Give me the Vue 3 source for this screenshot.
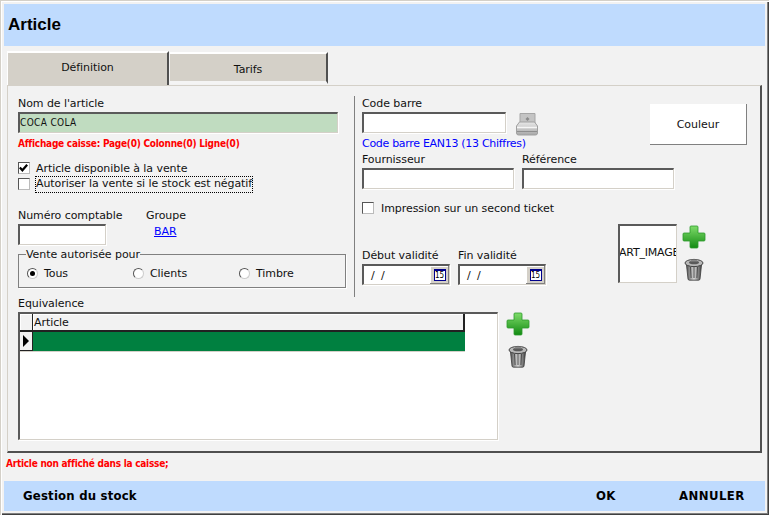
<script setup>
const radios = [
  { label: 'Tous', checked: true },
  { label: 'Clients', checked: false },
  { label: 'Timbre', checked: false },
]
</script>

<template>
  <div class="window">
    <header class="title">Article</header>
    <nav class="tabs">
      <div class="tab active">Définition</div>
      <div class="tab">Tarifs</div>
    </nav>
    <main class="panel">
      <div class="top">
        <section class="left">
          <label class="lbl">Nom de l'article</label>
          <div class="input name">COCA COLA</div>
          <div class="red-info">Affichage caisse: Page(0) Colonne(0) Ligne(0)</div>
          <div class="checks">
            <div class="check-row"><span class="box"><svg width="12" height="12" viewBox="0 0 12 12"><path d="M2 5.500 L4.800 8.500 L10 2.500" fill="none" stroke="#000" stroke-width="2.400"/></svg></span><span>Article disponible à la vente</span></div>
            <div class="check-row"><span class="box"></span><span class="focus">Autoriser la vente si le stock est négatif</span></div>
          </div>
          <div class="num-row">
            <div class="num-col">
              <label class="lbl">Numéro comptable</label>
              <div class="input num"></div>
            </div>
            <div>
              <label class="lbl">Groupe</label>
              <a class="link">BAR</a>
            </div>
          </div>
          <fieldset class="vente">
            <legend>Vente autorisée pour</legend>
            <div v-for="r in radios" :key="r.label" class="radio-item">
              <span class="radio" :class="{ on: r.checked }"></span>{{ r.label }}
            </div>
          </fieldset>
        </section>
        <section class="right">
          <div class="barcode-row">
            <div class="barcode-col">
              <label class="lbl">Code barre</label>
              <div class="input"></div>
              <div class="blue-info">Code barre EAN13 (13 Chiffres)</div>
            </div>
            <svg class="printer" width="24" height="24" viewBox="0 0 24 24">
              <defs><linearGradient id="pg" x1="0" y1="0" x2="0" y2="1"><stop offset="0" stop-color="#e8e8e8"/><stop offset="1" stop-color="#a8a8a8"/></linearGradient></defs>
              <path d="M5 1.500h15v10H5z" fill="#c4c4c4" stroke="#a6a6a6"/>
              <path d="M10.500 7l2-2 2 2-2 2z" fill="#8a8a8a"/>
              <path d="M1.500 14l3-4h15l3 4v7a2 2 0 0 1-2 2h-17a2 2 0 0 1-2-2z" fill="url(#pg)" stroke="#a0a0a0"/>
              <path d="M2 15.500h20" stroke="#f6f6f6" stroke-width="1.500"/>
              <path d="M2 19.500h20" stroke="#8e8e8e"/>
            </svg>
            <button class="couleur">Couleur</button>
          </div>
          <div class="supplier-row">
            <div><label class="lbl">Fournisseur</label><div class="input supplier"></div></div>
            <div><label class="lbl">Référence</label><div class="input supplier"></div></div>
          </div>
          <div class="check-row second"><span class="box"></span><span>Impression sur un second ticket</span></div>
          <div class="date-row">
            <div class="date">
              <label class="lbl">Début validité</label>
              <div class="input date-input"><span class="date-val">/ /</span><span class="cal"><span class="cal-ico">15</span></span></div>
            </div>
            <div class="date">
              <label class="lbl">Fin validité</label>
              <div class="input date-input"><span class="date-val">/ /</span><span class="cal"><span class="cal-ico">15</span></span></div>
            </div>
            <div class="image-box">ART_IMAGE</div>
            <div class="icons">
              <svg width="24" height="24" viewBox="0 0 24 24">
                <defs><linearGradient id="g1" x1="0" y1="0" x2="0" y2="1"><stop offset="0" stop-color="#7fdc6a"/><stop offset="1" stop-color="#128a12"/></linearGradient></defs>
                <path d="M9 1h6a1 1 0 0 1 1 1v6h6a1 1 0 0 1 1 1v6a1 1 0 0 1-1 1h-6v6a1 1 0 0 1-1 1H9a1 1 0 0 1-1-1v-6H2a1 1 0 0 1-1-1V9a1 1 0 0 1 1-1h6V2a1 1 0 0 1 1-1z" fill="url(#g1)" stroke="#2c9a2c" stroke-width=".8"/>
              </svg>
              <svg class="trash" width="20" height="24" viewBox="0 0 20 24">
                <defs><linearGradient id="t1" x1="0" y1="0" x2="1" y2="0"><stop offset="0" stop-color="#555"/><stop offset=".5" stop-color="#d8d8d8"/><stop offset="1" stop-color="#444"/></linearGradient></defs>
                <path d="M2.500 8h15l-1.500 14a1.500 1.500 0 0 1-1.500 1.200h-9A1.500 1.500 0 0 1 4 22z" fill="url(#t1)" stroke="#3a3a3a" stroke-width=".8"/>
                <path d="M6.500 10l.6 11M10 10v11M13.500 10l-.6 11" stroke="#4c4c4c"/>
                <ellipse cx="10" cy="6" rx="9" ry="3.600" fill="#b8b8b8" stroke="#444"/>
                <ellipse cx="10" cy="5.500" rx="5" ry="1.800" fill="#5a5a5a"/>
                <path d="M7 2.500h6v2H7z" fill="#888"/>
              </svg>
            </div>
          </div>
        </section>
      </div>
      <section>
        <label class="lbl eq-lbl">Equivalence</label>
        <div class="equiv-row">
          <div class="grid">
            <div class="grid-head"><span class="corner"></span><span class="col">Article</span></div>
            <div class="grid-line">
              <span class="row-head"><i class="arrow"></i></span><span class="cell"></span>
            </div>
          </div>
          <div class="icons equiv-icons">
            <svg width="24" height="24" viewBox="0 0 24 24">
              <defs><linearGradient id="g2" x1="0" y1="0" x2="0" y2="1"><stop offset="0" stop-color="#7fdc6a"/><stop offset="1" stop-color="#128a12"/></linearGradient></defs>
              <path d="M9 1h6a1 1 0 0 1 1 1v6h6a1 1 0 0 1 1 1v6a1 1 0 0 1-1 1h-6v6a1 1 0 0 1-1 1H9a1 1 0 0 1-1-1v-6H2a1 1 0 0 1-1-1V9a1 1 0 0 1 1-1h6V2a1 1 0 0 1 1-1z" fill="url(#g2)" stroke="#2c9a2c" stroke-width=".8"/>
            </svg>
            <svg class="trash" width="20" height="24" viewBox="0 0 20 24">
              <defs><linearGradient id="t2" x1="0" y1="0" x2="1" y2="0"><stop offset="0" stop-color="#555"/><stop offset=".5" stop-color="#d8d8d8"/><stop offset="1" stop-color="#444"/></linearGradient></defs>
              <path d="M2.500 8h15l-1.500 14a1.500 1.500 0 0 1-1.500 1.200h-9A1.500 1.500 0 0 1 4 22z" fill="url(#t2)" stroke="#3a3a3a" stroke-width=".8"/>
              <path d="M6.500 10l.6 11M10 10v11M13.500 10l-.6 11" stroke="#4c4c4c"/>
              <ellipse cx="10" cy="6" rx="9" ry="3.600" fill="#b8b8b8" stroke="#444"/>
              <ellipse cx="10" cy="5.500" rx="5" ry="1.800" fill="#5a5a5a"/>
              <path d="M7 2.500h6v2H7z" fill="#888"/>
            </svg>
          </div>
        </div>
      </section>
    </main>
    <div class="status">Article non affiché dans la caisse;</div>
    <footer class="footer">
      <span class="stock">Gestion du stock</span>
      <span class="ok">OK</span>
      <span class="cancel">ANNULER</span>
    </footer>
  </div>
</template>

<style>
html, body { margin: 0; background: #f2f2f2; }
</style>

<style scoped>
.window {
  box-sizing: border-box;
  width: 769px;
  height: 515px;
  padding: 4px;
  background: #f2f2f2;
  color: #111;
  font: 11px/13px "DejaVu Sans", sans-serif;
  letter-spacing: -0.07px;
  display: flex;
  flex-direction: column;
  box-shadow: inset 1px 1px 0 #d4d0c8, inset 2px 2px 0 #fff, inset -1px -1px 0 #404040, inset -2px -2px 0 #808080;
  overflow: hidden;
}
.title {
  height: 42px;
  flex: none;
  background: #bfdbfe;
  padding-left: 4px;
  font: bold 17px/42px "Liberation Sans", Tahoma, sans-serif;
  letter-spacing: 0;
  color: #000;
}
.tabs {
  display: flex;
  align-items: flex-end;
  height: 39px;
  flex: none;
  margin-left: 3px;
  gap: 1px;
}
.tab {
  box-sizing: border-box;
  background: #d4d0c8;
  border-top: 2px solid #fff;
  border-right: 2px solid #505050;
  text-align: center;
}
.tab:not(.active) { width: 158px; height: 32px; line-height: 32px; margin-bottom: 1px; border-bottom: 3px solid #f4f4f4; }
.tab.active { width: 162px; height: 34px; line-height: 30px; border-left: 1px solid #fff; }
.panel {
  box-sizing: border-box;
  width: 755px;
  height: 368px;
  margin-left: 3px;
  flex: none;
  padding: 10px 10px 0 10px;
  border-top: 1px solid #d4d0c8;
  border-left: 1px solid #d4d0c8;
  border-right: 2px solid #505050;
  border-bottom: 2px solid #505050;
}
.top { display: flex; height: 201px; }
.left {
  box-sizing: border-box;
  flex: none;
  width: 337px;
  height: 201px;
  border-right: 1px solid #808080;
}
.lbl { display: block; height: 16px; line-height: 16px; }
.input {
  box-sizing: border-box;
  height: 21px;
  background: #fff;
  border-top: 2px solid #5a5a5a;
  border-left: 2px solid #5a5a5a;
  border-right: 1px solid #d4d0c8;
  border-bottom: 1px solid #d4d0c8;
  box-shadow: 1px 1px 0 #fff;
}
.name {
  width: 320px;
  background: #c0dcc0;
  font: 10px/17px "DejaVu Sans Condensed", "DejaVu Sans", sans-serif;
  letter-spacing: 0.35px;
}
.red-info {
  color: #f00;
  font: bold 10px/13px "DejaVu Sans Condensed", "DejaVu Sans", sans-serif;
  letter-spacing: -0.25px;
  margin-top: 4px;
}
.checks { margin-top: 10px; }
.check-row { display: flex; align-items: center; height: 16px; gap: 6px; }
.box {
  box-sizing: border-box;
  width: 12px;
  height: 12px;
  background: #fff;
  border-top: 1px solid #555;
  border-left: 1px solid #555;
  border-right: 1px solid #bbb;
  border-bottom: 1px solid #bbb;
  display: flex;
  flex: none;
}
.box svg { margin: -1px 0 0 -1px; }
.focus { outline: 1px dotted #000; padding: 0 0 2px; }
.num-row { display: flex; margin-top: 16px; }
.num-col { width: 128px; }
.num { width: 88px; }
.link { display: block; margin: 1px 0 0 8px; color: #00f; text-decoration: underline; }
.vente {
  box-sizing: border-box;
  width: 328px;
  height: 40px;
  margin: 3px 0 0;
  padding: 0 0 0 8px;
  border: 1px solid #808080;
  box-shadow: 1px 1px 0 #fff;
  display: flex;
  align-items: center;
}
.vente legend { padding: 0; margin-left: -1px; line-height: 13px; }
.radio-item { width: 106px; display: flex; align-items: center; gap: 6px; margin-top: -1px; }
.radio {
  box-sizing: border-box;
  width: 11px;
  height: 11px;
  border-radius: 50%;
  background: #fff;
  border: 1px solid;
  border-color: #555 #ccc #ccc #555;
  position: relative;
}
.radio.on::after {
  content: "";
  position: absolute;
  left: 2px;
  top: 2px;
  width: 5px;
  height: 5px;
  border-radius: 50%;
  background: #000;
}
.right { flex: none; box-sizing: border-box; padding-left: 7px; width: 392px; }
.barcode-row { display: flex; height: 56px; }
.barcode-col { width: 144px; flex: none; }
.blue-info { color: #00f; margin-top: 4px; white-space: nowrap; letter-spacing: -0.3px; }
.printer { flex: none; margin: 16px 0 0 9px; }
.couleur {
  box-sizing: border-box;
  flex: none;
  width: 97px;
  height: 41px;
  margin: 8px 0 0 111px;
  background: #fff;
  border: none;
  border-right: 1px solid #808080;
  border-bottom: 1px solid #808080;
  font: inherit;
  color: #111;
}
.supplier-row { display: flex; gap: 8px; }
.supplier { width: 152px; }
.second { margin-top: 11px; gap: 7px; }
.date-row { display: flex; margin-top: 8px; align-items: flex-end; height: 61px; }
.date { margin-right: 8px; }
.date-input { width: 88px; display: flex; justify-content: space-between; }
.date-val { padding-left: 7px; line-height: 19px; word-spacing: 3px; }
.cal {
  flex: none;
  width: 19px;
  background: #d4d0c8;
  display: flex;
  align-items: center;
  justify-content: center;
  box-shadow: inset -1px -1px 0 #808080, inset 1px 1px 0 #fff;
}
.cal-ico {
  width: 12px;
  height: 12px;
  box-sizing: border-box;
  background: #fff;
  border: 1px solid #00008b;
  border-top-width: 2px;
  font: 8px/9px "DejaVu Sans Condensed", sans-serif;
  letter-spacing: 0;
  color: #000;
  text-align: center;
  overflow: hidden;
}
.image-box {
  box-sizing: border-box;
  width: 59px;
  height: 59px;
  margin: 0 0 2px 64px;
  background: #fff;
  border-top: 2px solid #5a5a5a;
  border-left: 2px solid #5a5a5a;
  border-right: 1px solid #d4d0c8;
  border-bottom: 1px solid #d4d0c8;
  overflow: hidden;
  white-space: nowrap;
  font: 11px/53px "DejaVu Sans", sans-serif;
  letter-spacing: -0.2px;
  text-indent: -1px;
  color: #111;
}
.icons { display: flex; flex-direction: column; align-items: center; width: 24px; margin: 1px 0 0 5px; align-self: flex-start; }
.icons .trash { margin-top: 8px; }
.eq-lbl { height: 15px; line-height: 14px; }
.equiv-row { display: flex; }
.grid {
  box-sizing: border-box;
  width: 480px;
  height: 128px;
  background: #fff;
  border-top: 2px solid #5a5a5a;
  border-left: 2px solid #5a5a5a;
  border-right: 1px solid #d4d0c8;
  border-bottom: 1px solid #d4d0c8;
  box-shadow: 1px 1px 0 #fff;
}
.grid-head { box-sizing: border-box; display: flex; height: 18px; width: 445px; border-bottom: 2px solid #222; }
.corner { width: 12px; background: #f2f2f2; border-right: 1px solid #222; box-shadow: inset 1px 1px 0 #fff; }
.col { flex: 1; background: #f2f2f2; padding-left: 1px; line-height: 18px; border-right: 2px solid #222; box-shadow: inset 1px 1px 0 #fff; }
.grid-line { display: flex; height: 19px; width: 445px; border-bottom: 1px solid #d4d0c8; }
.row-head { box-sizing: border-box; width: 13px; background: #f2f2f2; border-right: 1px solid #222; border-bottom: 1px solid #222; display: flex; align-items: center; padding-left: 3px; }
.arrow { border-left: 6px solid #000; border-top: 6px solid transparent; border-bottom: 6px solid transparent; }
.cell { flex: 1; background: #008040; }
.equiv-icons { margin: 0 0 0 8px; }
.status {
  height: 28px;
  flex: none;
  padding-left: 2px;
  box-sizing: border-box;
  color: #f00;
  font: bold 10px/22px "DejaVu Sans Condensed", "DejaVu Sans", sans-serif;
  letter-spacing: -0.25px;
}
.footer {
  height: 30px;
  flex: none;
  background: #bfdbfe;
  display: flex;
  align-items: center;
  font: bold 13px/30px "DejaVu Sans Condensed", "Liberation Sans", sans-serif;
  letter-spacing: 0.2px;
  color: #000;
}
.stock { margin-left: 19px; width: 573px; }
.ok { width: 83px; }
.cancel { letter-spacing: 0.45px; }
</style>
